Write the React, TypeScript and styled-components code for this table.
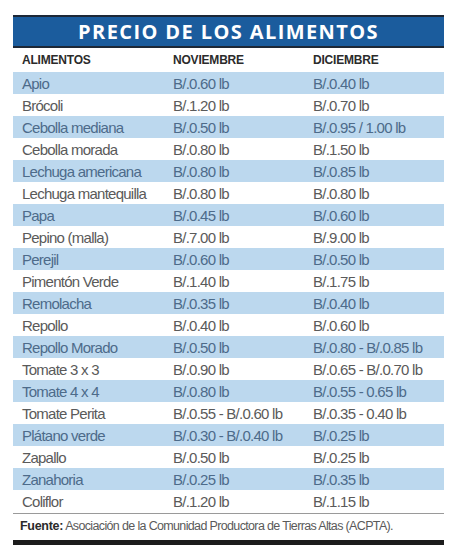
import { createGlobalStyle, styled } from "styled-components";

const GlobalStyle = createGlobalStyle`
    html, body {
        margin: 0;
        padding: 0;
        background: #ffffff;
    }
`

type PriceRow = {
    name: string;
    nov: string;
    dic: string;
}

const rows: PriceRow[] = [
    { name: "Apio", nov: "B/.0.60 lb", dic: "B/.0.40 lb" },
    { name: "Brócoli", nov: "B/.1.20 lb", dic: "B/.0.70 lb" },
    { name: "Cebolla mediana", nov: "B/.0.50 lb", dic: "B/.0.95 / 1.00 lb" },
    { name: "Cebolla morada", nov: "B/.0.80 lb", dic: "B/.1.50 lb" },
    { name: "Lechuga americana", nov: "B/.0.80 lb", dic: "B/.0.85 lb" },
    { name: "Lechuga mantequilla", nov: "B/.0.80 lb", dic: "B/.0.80 lb" },
    { name: "Papa", nov: "B/.0.45 lb", dic: "B/.0.60 lb" },
    { name: "Pepino (malla)", nov: "B/.7.00 lb", dic: "B/.9.00 lb" },
    { name: "Perejil", nov: "B/.0.60 lb", dic: "B/.0.50 lb" },
    { name: "Pimentón Verde", nov: "B/.1.40 lb", dic: "B/.1.75 lb" },
    { name: "Remolacha", nov: "B/.0.35 lb", dic: "B/.0.40 lb" },
    { name: "Repollo", nov: "B/.0.40 lb", dic: "B/.0.60 lb" },
    { name: "Repollo Morado", nov: "B/.0.50 lb", dic: "B/.0.80 - B/.0.85 lb" },
    { name: "Tomate 3 x 3", nov: "B/.0.90 lb", dic: "B/.0.65 - B/.0.70 lb" },
    { name: "Tomate 4 x 4", nov: "B/.0.80 lb", dic: "B/.0.55 - 0.65 lb" },
    { name: "Tomate Perita", nov: "B/.0.55 - B/.0.60 lb", dic: "B/.0.35 - 0.40 lb" },
    { name: "Plátano verde", nov: "B/.0.30 - B/.0.40  lb", dic: "B/.0.25 lb" },
    { name: "Zapallo", nov: "B/.0.50 lb", dic: "B/.0.25 lb" },
    { name: "Zanahoria", nov: "B/.0.25 lb", dic: "B/.0.35 lb" },
    { name: "Coliflor", nov: "B/.1.20 lb", dic: "B/.1.15 lb" },
];

const Page = styled.div`
    padding: 15px 11px 0 13px;
    font-family: "Liberation Sans", Arial, sans-serif;
`

const TitleBar = styled.div`
    height: 29px;
    display: flex;
    align-items: center;
    justify-content: center;
    background-color: #1b5c9d;
    border-top: 2px solid #1d2837;
    border-bottom: 2px solid #1d2837;
    color: #ffffff;
    font-family: "Open Sans", "DejaVu Sans", sans-serif;
    font-weight: 700;
    font-size: 20px;
    letter-spacing: 1.4px;
`

const Grid = styled.div`
    display: grid;
    grid-template-columns: 151px 140px 1fr;
`

const HeadCell = styled.div`
    height: 24px;
    display: flex;
    align-items: center;
    padding-left: 9px;
    font-weight: 700;
    font-size: 12px;
    letter-spacing: -0.2px;
    color: #2b2b2b;
`

const Cell = styled.div<{ $shaded: boolean }>`
    height: 22px;
    display: flex;
    align-items: center;
    padding-left: 9px;
    white-space: nowrap;
    font-size: 15px;
    letter-spacing: -0.75px;
    background-color: ${(p) => (p.$shaded ? "#bcd8ee" : "#ffffff")};
    color: ${(p) => (p.$shaded ? "#4d6b8a" : "#5a5a5a")};
`

const Source = styled.div`
    margin-top: 1px;
    border-top: 1px solid #9a9a9a;
    padding: 5px 0 7px 7px;
    font-size: 12.5px;
    letter-spacing: -0.65px;
    color: #5a5a5a;
    white-space: nowrap;

    b {
        color: #2b2b2b;
        letter-spacing: -0.3px;
    }
`

const BottomBar = styled.div`
    height: 5px;
    background-color: #1c1c1c;
`

export default function App() {
    return (
        <Page>
            <GlobalStyle />
            <TitleBar>PRECIO DE LOS ALIMENTOS</TitleBar>
            <Grid>
                <HeadCell>ALIMENTOS</HeadCell>
                <HeadCell>NOVIEMBRE</HeadCell>
                <HeadCell>DICIEMBRE</HeadCell>
                {rows.map((row, i) => (
                    <>
                        <Cell key={`${row.name}-a`} $shaded={i % 2 === 0}>{row.name}</Cell>
                        <Cell key={`${row.name}-b`} $shaded={i % 2 === 0}>{row.nov}</Cell>
                        <Cell key={`${row.name}-c`} $shaded={i % 2 === 0}>{row.dic}</Cell>
                    </>
                ))}
            </Grid>
            <Source><b>Fuente:</b> Asociación de la Comunidad Productora de Tierras Altas (ACPTA).</Source>
            <BottomBar />
        </Page>
    )
}
